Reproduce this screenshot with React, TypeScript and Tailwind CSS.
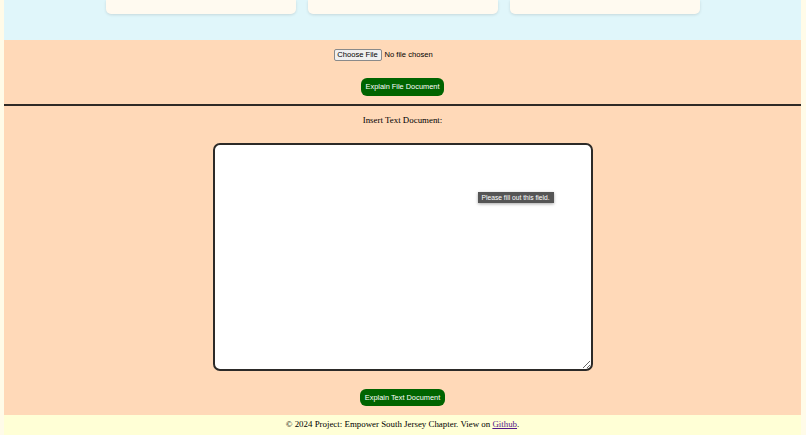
import React from "react";

export default function App() {
  return (
    <div className="min-h-[435px] w-full bg-[#fffbe8] overflow-hidden">
      <div className="ml-[4px] mr-[5px] flex flex-col">
        {/* top blue section */}
        <section className="h-[40px] bg-[#e0f6fa] flex justify-center gap-[12px]">
          <div className="w-[190px] h-[14px] bg-[#fffaf0] rounded-b-[5px] shadow-[0_1px_3px_rgba(0,0,0,0.12)]" />
          <div className="w-[190px] h-[14px] bg-[#fffaf0] rounded-b-[5px] shadow-[0_1px_3px_rgba(0,0,0,0.12)]" />
          <div className="w-[190px] h-[14px] bg-[#fffaf0] rounded-b-[5px] shadow-[0_1px_3px_rgba(0,0,0,0.12)]" />
        </section>

        {/* peach section */}
        <section className="h-[375px] bg-[#ffd9b8] flex flex-col items-center pt-[8px]">
          <div className="flex items-center gap-[3px] h-[13px] w-[138px] font-['Liberation_Sans',Arial,sans-serif] text-[7.6px] text-black">
            <button className="h-[12px] w-[48px] shrink-0 border border-[#8a8a8a] rounded-[2px] bg-[#efefef] leading-[10px] text-[7.6px] text-black">
              Choose File
            </button>
            <span className="leading-[10px] whitespace-nowrap">No file chosen</span>
          </div>

          <button className="mt-[17px] h-[18px] w-[83px] rounded-[6px] bg-[#006400] text-white font-['Liberation_Sans',Arial,sans-serif] text-[7.4px] leading-[18px] whitespace-nowrap">
            Explain File Document
          </button>

          <div className="mt-[8px] w-full h-[2px] bg-[#2f2a26]" />

          <p className="mt-[6px] h-[16px] leading-[16px] font-['Liberation_Serif','Times_New_Roman',serif] text-[8.9px] text-black">
            Insert Text Document:
          </p>

          <div className="relative mt-[15px]">
            <textarea
              required
              className="block w-[380px] h-[228px] bg-white border-2 border-[#2c2a28] rounded-[7px] resize-y outline-none"
            />
            <div className="absolute left-[265px] top-[49px] h-[11px] px-[4px] bg-[#555555] text-white font-['Liberation_Sans',Arial,sans-serif] text-[6.7px] leading-[11px] whitespace-nowrap shadow-[0_1px_3px_rgba(0,0,0,0.35)]">
              Please fill out this field.
            </div>
          </div>

          <button className="mt-[18px] h-[17px] w-[85px] rounded-[6px] bg-[#006400] text-white font-['Liberation_Sans',Arial,sans-serif] text-[7.4px] leading-[17px] whitespace-nowrap">
            Explain Text Document
          </button>
        </section>

        {/* footer */}
        <footer className="h-[20px] bg-[#ffffd6] flex items-center justify-center font-['Liberation_Serif','Times_New_Roman',serif] text-[8.9px] text-black">
          <span>
            © 2024 Project: Empower South Jersey Chapter. View on{" "}
            <a href="#" className="underline text-[#551a8b]">Github</a>.
          </span>
        </footer>
      </div>
    </div>
  );
}
